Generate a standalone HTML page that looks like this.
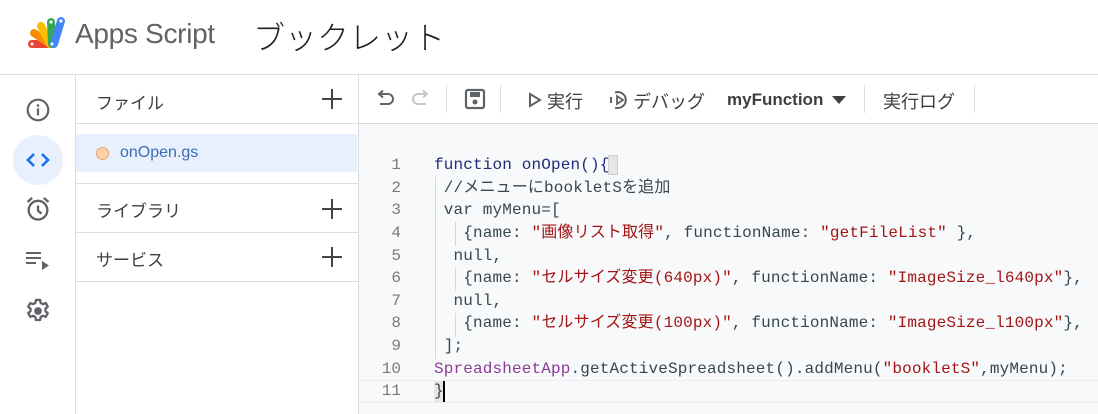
<!DOCTYPE html>
<html><head><meta charset="utf-8">
<style>
*{margin:0;padding:0;box-sizing:border-box}
body{width:1098px;height:414px;overflow:hidden;background:#fff;font-family:"Liberation Sans","Noto Sans CJK JP",sans-serif;color:#3c4043;position:relative}
.abs{position:absolute}
.hl{position:absolute;height:1px;background:#dadce0}
.vl{position:absolute;width:1px;background:#dadce0}
.code{position:absolute;left:359px;top:124px;right:0;bottom:0;background:#f8f9fa}
.ln{position:absolute;left:370px;width:31px;height:20px;line-height:20px;text-align:right;font:16px/20px "Liberation Mono",monospace;color:#7a7a7a}
.cl{position:absolute;left:434px;height:20px;font:16px/20px "Liberation Mono","Noto Sans CJK JP",monospace;letter-spacing:0.15px;color:#37474f;white-space:pre;overflow:visible}
.cl span{line-height:20px}
.k{color:#202a78}.s{color:#a31515}.p{color:#8c3a96}
.guide{position:absolute;width:1px;background:#d8d8d8}
.tb{position:absolute;top:88px;font-size:18px;color:#3c4043}
.lbl{position:absolute;left:96px;font-size:17px;color:#3c4043}
.plus{position:absolute;left:321px}
</style></head><body>
<!-- header -->
<svg class="abs" style="left:24px;top:14px" width="42" height="36" viewBox="0 0 42 36">
<g stroke-linecap="round" stroke-width="8" fill="none">
<line x1="26" y1="30" x2="8" y2="30" stroke="#ea4335"/>
<line x1="26" y1="30" x2="10" y2="19" stroke="#fb8c00"/>
<line x1="26" y1="30" x2="17" y2="12" stroke="#fbbc04"/>
<line x1="28" y1="30" x2="27" y2="8" stroke="#34a853"/>
<line x1="30" y1="30" x2="37" y2="7" stroke="#4285f4"/>
</g>
<circle cx="27" cy="8" r="1.6" fill="#fff"/><circle cx="37" cy="7" r="1.6" fill="#fff"/><circle cx="28" cy="30" r="1.5" fill="#fff"/><circle cx="8" cy="30" r="1.5" fill="#fff"/>
</svg>
<div class="abs" style="left:75px;top:18px;font-size:28px;color:#5f6368;letter-spacing:-0.3px">Apps Script</div>
<div class="abs" style="left:253px;top:13px;font-size:32px;font-weight:300;color:#202124">ブックレット</div>
<div class="hl" style="left:0;top:74px;width:1098px"></div>
<!-- rail -->
<div class="vl" style="left:75px;top:74px;height:340px"></div>
<svg class="abs" style="left:25px;top:97px" width="26" height="26" viewBox="0 0 24 24"><circle cx="12" cy="12" r="9.5" fill="none" stroke="#5f6368" stroke-width="2"/><rect x="11" y="10.5" width="2" height="6.5" fill="#5f6368"/><circle cx="12" cy="7.8" r="1.2" fill="#5f6368"/></svg>
<div class="abs" style="left:13px;top:135px;width:50px;height:50px;border-radius:50%;background:#e8f0fe"></div>
<svg class="abs" style="left:25px;top:148px" width="26" height="24" viewBox="0 0 26 24"><path d="M9 6L3 12l6 6M17 6l6 6-6 6" fill="none" stroke="#1a73e8" stroke-width="2.6"/></svg>
<svg class="abs" style="left:24px;top:195px" width="28" height="28" viewBox="0 0 24 24"><circle cx="12" cy="13" r="8" fill="none" stroke="#5f6368" stroke-width="2"/><path d="M12 9v4.5l3 2.5" fill="none" stroke="#5f6368" stroke-width="2"/><path d="M3 6l4-3.5M21 6l-4-3.5" stroke="#5f6368" stroke-width="2"/></svg>
<svg class="abs" style="left:25px;top:250px" width="26" height="22" viewBox="0 0 26 22"><rect x="1" y="2" width="15" height="2" fill="#5f6368"/><rect x="1" y="7" width="15" height="2" fill="#5f6368"/><rect x="1" y="12" width="10" height="2" fill="#5f6368"/><path d="M17 11l7 4.5-7 4.5z" fill="#5f6368"/></svg>
<svg class="abs" style="left:24px;top:297px" width="28" height="28" viewBox="0 0 24 24"><path fill="none" stroke="#5f6368" stroke-width="2" stroke-linejoin="round" d="M10.2 2.5h3.6l.5 2.6 1.8 1 2.5-.9 1.8 3.1-2 1.8v2l2 1.8-1.8 3.1-2.5-.9-1.8 1-.5 2.6h-3.6l-.5-2.6-1.8-1-2.5.9-1.8-3.1 2-1.8v-2l-2-1.8 1.8-3.1 2.5.9 1.8-1z"/><circle cx="12" cy="12" r="3.3" fill="#5f6368"/></svg>
<!-- files panel -->
<div class="vl" style="left:358px;top:74px;height:340px"></div>
<div class="lbl" style="top:89px">ファイル</div>
<svg class="plus" style="top:88px" width="22" height="22"><path d="M11 1v20M1 11h20" stroke="#444" stroke-width="2"/></svg>
<div class="hl" style="left:76px;top:123px;width:282px"></div>
<div class="abs" style="left:76px;top:134px;width:281px;height:38px;background:#e8f0fe"></div>
<div class="abs" style="left:96px;top:147px;width:13px;height:13px;border-radius:50%;background:#fbd3a8;border:1.5px solid #e8a068"></div>
<div class="abs" style="left:120px;top:144px;font-size:16px;color:#3b6db3">onOpen.gs</div>
<div class="hl" style="left:76px;top:183px;width:282px"></div>
<div class="lbl" style="top:197px">ライブラリ</div>
<svg class="plus" style="top:198px" width="22" height="22"><path d="M11 1v20M1 11h20" stroke="#444" stroke-width="2"/></svg>
<div class="hl" style="left:76px;top:232px;width:282px"></div>
<div class="lbl" style="top:246px">サービス</div>
<svg class="plus" style="top:246px" width="22" height="22"><path d="M11 1v20M1 11h20" stroke="#444" stroke-width="2"/></svg>
<div class="hl" style="left:76px;top:281px;width:282px"></div>
<!-- toolbar -->
<svg class="abs" style="left:376px;top:90px" width="20" height="18" viewBox="0 0 20 18"><path d="M4 4h8a5 5 0 010 10H4" fill="none" stroke="#5f6368" stroke-width="2"/><path d="M7 0.5L3 4l4 3.5" fill="none" stroke="#5f6368" stroke-width="2"/></svg>
<svg class="abs" style="left:410px;top:90px" width="20" height="18" viewBox="0 0 20 18"><path d="M16 4H8a5 5 0 000 10h8" fill="none" stroke="#c4c7c5" stroke-width="2"/><path d="M13 0.5L17 4l-4 3.5" fill="none" stroke="#c4c7c5" stroke-width="2"/></svg>
<div class="vl" style="left:446px;top:85px;height:28px"></div>
<svg class="abs" style="left:464px;top:88px" width="22" height="22" viewBox="0 0 22 22"><rect x="2" y="2" width="18" height="18" rx="2" fill="none" stroke="#5f6368" stroke-width="2.2"/><rect x="6" y="4" width="10" height="5" fill="#5f6368"/><circle cx="11" cy="14" r="2.5" fill="#5f6368"/></svg>
<div class="vl" style="left:500px;top:85px;height:28px"></div>
<svg class="abs" style="left:528px;top:92px" width="14" height="16" viewBox="0 0 14 16"><path d="M2 2l10 6-10 6z" fill="none" stroke="#5f6368" stroke-width="2"/></svg>
<div class="tb" style="left:547px">実行</div>
<svg class="abs" style="left:609px;top:89px" width="22" height="22" viewBox="0 0 22 22"><path d="M6 3.5A8 8 0 116 18.5" fill="none" stroke="#5f6368" stroke-width="2"/><path d="M8 7l6 4-6 4z" fill="none" stroke="#5f6368" stroke-width="1.8"/><path d="M2 8v6" stroke="#5f6368" stroke-width="2"/></svg>
<div class="tb" style="left:633px">デバッグ</div>
<div class="tb" style="left:727px;top:90px;font-weight:bold;font-size:17px;color:#3c4043">myFunction</div>
<svg class="abs" style="left:832px;top:96px" width="14" height="8" viewBox="0 0 14 8"><path d="M0 0h14L7 8z" fill="#3c4043"/></svg>
<div class="vl" style="left:864px;top:85px;height:28px"></div>
<div class="tb" style="left:883px">実行ログ</div>
<div class="vl" style="left:974px;top:85px;height:28px"></div>
<div class="hl" style="left:359px;top:123px;width:739px"></div>
<!-- code -->
<div class="code"></div>
<div class="guide" style="left:435px;top:177px;height:182px"></div>
<div class="guide" style="left:455px;top:222px;height:24px"></div>
<div class="guide" style="left:455px;top:267px;height:24px"></div>
<div class="guide" style="left:455px;top:313px;height:24px"></div>
<div class="hl" style="left:359px;top:380px;width:739px;background:#eceff1"></div>
<div class="hl" style="left:359px;top:402px;width:739px;background:#eceff1"></div>
<div class="abs" style="left:608px;top:155px;width:10px;height:20px;background:#e6e6e6;border:1px solid #cfcfcf"></div>
<div class="abs" style="left:434px;top:381px;width:10px;height:21px;background:#e6e6e6"></div>
<div class="abs" style="left:443px;top:381px;width:2px;height:21px;background:#000"></div>
<div class="ln" style="top:155px">1</div><div class="cl" style="top:155px"><span class="k">function onOpen(){</span></div>
<div class="ln" style="top:178px">2</div><div class="cl" style="top:178px"> //メニューにbookletSを追加</div>
<div class="ln" style="top:200px">3</div><div class="cl" style="top:200px"> var myMenu=[</div>
<div class="ln" style="top:223px">4</div><div class="cl" style="top:223px">   {name: <span class="s">"画像リスト取得"</span>, functionName: <span class="s">"getFileList"</span> },</div>
<div class="ln" style="top:246px">5</div><div class="cl" style="top:246px">  null,</div>
<div class="ln" style="top:268px">6</div><div class="cl" style="top:268px">   {name: <span class="s">"セルサイズ変更(640px)"</span>, functionName: <span class="s">"ImageSize_l640px"</span>},</div>
<div class="ln" style="top:291px">7</div><div class="cl" style="top:291px">  null,</div>
<div class="ln" style="top:313px">8</div><div class="cl" style="top:313px">   {name: <span class="s">"セルサイズ変更(100px)"</span>, functionName: <span class="s">"ImageSize_l100px"</span>},</div>
<div class="ln" style="top:336px">9</div><div class="cl" style="top:336px"> ];</div>
<div class="ln" style="top:359px">10</div><div class="cl" style="top:359px"><span class="p">SpreadsheetApp</span>.getActiveSpreadsheet().addMenu(<span class="s">"bookletS"</span>,myMenu);</div>
<div class="ln" style="top:381px">11</div><div class="cl" style="top:381px">}</div>
</body></html>
